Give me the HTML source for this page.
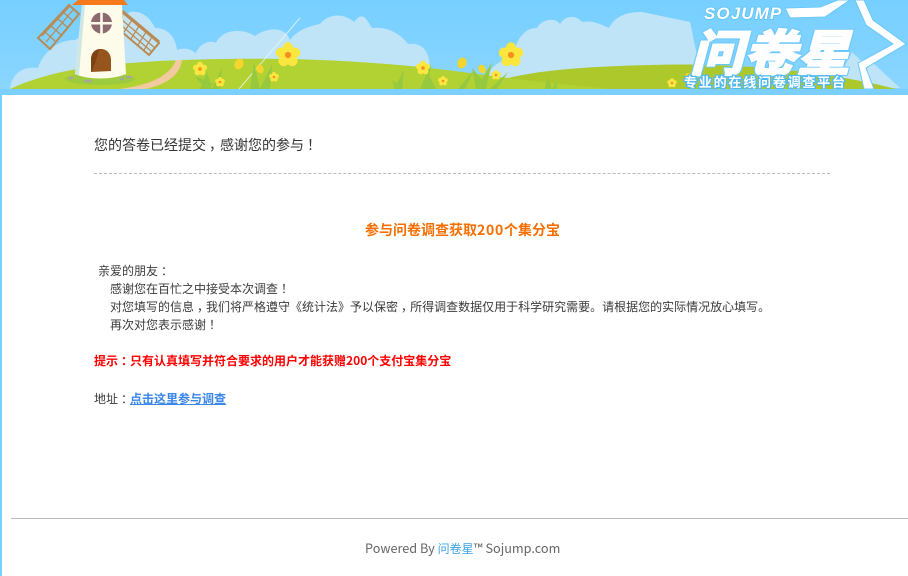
<!DOCTYPE html>
<html lang="zh">
<head>
<meta charset="utf-8">
<title>问卷星</title>
<style>
html,body{margin:0;padding:0;width:908px;height:576px;overflow:hidden;background:#fff;}
body{position:relative;font-family:"Liberation Sans","Noto Sans CJK SC",sans-serif;color:#333;}
.t{position:absolute;white-space:nowrap;font-family:"Noto Sans CJK SC","Liberation Sans",sans-serif;font-size:12px;line-height:18px;color:#3a3a3a;}
.d{letter-spacing:.75px;}
.p{position:relative;left:3px;}
#bar{position:absolute;left:0;top:89px;width:908px;height:6px;background:#7bd0ff;}
#lb{position:absolute;left:0;top:95px;width:2px;height:481px;background:#7bd0ff;}
#dash{position:absolute;left:94px;top:173px;width:736px;border-top:1px dashed #bbb;}
#fl{position:absolute;left:11px;top:518px;width:897px;height:1px;background:#bbb;}
svg{position:absolute;left:0;top:0;display:block;}
a{text-decoration:none;}
</style>
</head>
<body>
<svg width="908" height="89" viewBox="0 0 908 89" xmlns="http://www.w3.org/2000/svg">
  <defs>
    <linearGradient id="sky" x1="0" y1="0" x2="0" y2="1"><stop offset="0" stop-color="#76cfff"/><stop offset="1" stop-color="#8ad6ff"/></linearGradient>
    <g id="fl1"><g fill="#f9e63f"><circle cx="0" cy="-7" r="5"/><circle cx="6.700" cy="-2.200" r="5"/><circle cx="4.100" cy="5.700" r="5"/><circle cx="-4.100" cy="5.700" r="5"/><circle cx="-6.700" cy="-2.200" r="5"/><circle r="5"/></g><circle r="3" fill="#f68f1e"/></g>
  </defs>
  <rect width="908" height="89" fill="url(#sky)"/>
  <!-- clouds -->
  <g fill="#c0e4f7">
    <path d="M10 89C12 72 25 66 38 68C42 55 55 40 75 40L130 12C145 10 152 22 155 28C170 28 176 40 177 50C188 46 193 52 196 53C200 42 212 40 216 43C222 30 240 27 255 36C265 28 285 25 290 40C297 30 310 26 320 24C330 12 345 14 354 22C362 12 365 16 372 28C390 26 402 36 408 44C425 42 430 55 430 70L440 89Z"/>
    <path d="M488 89C486 72 492 62 513 58C516 38 525 28 537 28C542 19 555 17 560 24C565 16 575 14 582 22C592 20 600 24 609 28C616 14 630 12 642 12L690 22L700 70L600 89Z"/>
    <path d="M845 66L852 52L860 60L872 62L900 88H840Z"/>
  </g>
  <!-- hills -->
  <path d="M492 89L508 78C550 68 610 66 650 65C740 62 830 72 896 89Z" fill="#adc82b"/>
  <path d="M10 89C40 75 80 66 130 63C190 58 280 58 320 60C370 62 420 66 470 73C520 80 560 84 610 89Z" fill="#b2d233"/>
  <path d="M120 89C150 85 170 76 176 60L182 60C180 76 165 85 145 89Z" fill="#f3c9a0"/>
  <!-- thin white line -->
  <path d="M239 89L300 18" stroke="#e8f6ff" stroke-width="1" opacity=".8" fill="none"/>
  <!-- blades -->
  <g fill="none" stroke="#b98a52" stroke-width="1.200">
    <path d="M38 38L69 5L79 14L50 49Z" stroke-width="2"/>
    <path d="M44 31L55 41M50 25L61 35M57 18L67 27M62 11L73 21M46 42L73 10M42 36L70 6"/>
    <path d="M122 12L159 43L149 55L122 32Z" stroke-width="2"/>
    <path d="M122 20L155 48M122 26L152 52M132 20L124 32M139 26L131 39M146 32L138 45M152 37L144 50"/>
  </g>
  <path d="M122 11L159 42" stroke="#b98a52" stroke-width="3"/>
  <!-- windmill -->
  <ellipse cx="100" cy="79" rx="35" ry="6" fill="#9ccb3f"/>
  <path d="M82 5L122 5L126 74C112 80 88 80 75 74Z" fill="#fdfbe9"/>
  <path d="M82 5L75 74L79 75L85 5Z" fill="#cfe7e4"/>
  <path d="M78 0H124L128 5H72Z" fill="#f6791c"/>
  <circle cx="101.500" cy="23" r="10.500" fill="#8c6a70"/>
  <path d="M90 22H113V24.500H90ZM100.200 12H102.800V34H100.200Z" fill="#fdfbe9"/>
  <path d="M91 72V60C91 52 96 49 101 49C107 49 111 54 111 60V71Z" fill="#96551c"/>
  <path d="M91 72V60C91 52 96 49 100 49C97 53 96 65 91 72Z" fill="#7e4312"/>
  <g fill="#a9a3a0"><ellipse cx="71" cy="78" rx="2.500" ry="1.400"/><ellipse cx="88" cy="81" rx="4" ry="1.400"/><ellipse cx="122" cy="79" rx="2.500" ry="1.400"/><ellipse cx="129" cy="77" rx="3" ry="1.400"/></g>
  <!-- grass -->
  <g fill="#97c93f">
    <path d="M200 89L207 72L212 89ZM212 89L222 68L220 89ZM250 89L254 62L260 89ZM260 89L272 64L270 89ZM205 89L195 76L214 84Z"/>
    <path d="M394 89L404 70L402 89ZM420 89L431 64L428 89ZM428 89L424 66L436 89ZM458 89L474 70L465 89ZM476 89L492 62L486 89ZM490 89L508 72L497 89ZM476 89L472 68L482 80ZM395 89L392 80L400 86Z"/>
    <path d="M545 89L547 76L552 89ZM552 89L558 80L556 89Z"/>
  </g>
  <!-- flowers -->
  <use href="#fl1" transform="translate(288,55) scale(1.050)"/>
  <use href="#fl1" transform="translate(200,69) scale(.6)"/>
  <use href="#fl1" transform="translate(220,82) scale(.42)"/>
  <use href="#fl1" transform="translate(274,77) scale(.42)"/>
  <use href="#fl1" transform="translate(423,68) scale(.6)"/>
  <use href="#fl1" transform="translate(443,81) scale(.42)"/>
  <use href="#fl1" transform="translate(496,75) scale(.42)"/>
  <use href="#fl1" transform="translate(511,55) scale(1.050)"/>
  <use href="#fl1" transform="translate(672,83) scale(.4)"/>
  <g fill="#f3d52e">
    <ellipse cx="239" cy="64" rx="4.500" ry="5.500" transform="rotate(25 239 64)"/>
    <ellipse cx="260" cy="69" rx="3.500" ry="4.500" transform="rotate(-30 260 69)"/>
    <ellipse cx="462" cy="63" rx="4.500" ry="5.500" transform="rotate(25 462 63)"/>
    <ellipse cx="482" cy="69" rx="3.500" ry="4.500" transform="rotate(-30 482 69)"/>
    <circle cx="688" cy="76" r="3"/>
  </g>
  <!-- star outline -->
  <g fill="#fff" stroke="#6cc8fb" stroke-width="1">
    <path d="M785 8L820 7L838 0H850L825 17L790 18Z"/>
    <path d="M855 0H864L873 20L906 44L866 68L874 89H864L858 63L893 44L866 25Z"/>
  </g>
  <!-- logo -->
  <g font-family="'Noto Sans CJK SC','WenQuanYi Zen Hei',sans-serif" font-weight="900" fill="#fff">
    <text transform="translate(690,71) skewX(-15) scale(1,.88)" font-size="56" textLength="160" lengthAdjust="spacingAndGlyphs" stroke="#6cc8fb" stroke-width="4" stroke-linejoin="round">问卷星</text>
    <text transform="translate(690,71) skewX(-15) scale(1,.88)" font-size="56" textLength="160" lengthAdjust="spacingAndGlyphs" stroke="#fff" stroke-width="1.500">问卷星</text>
    <text x="684" y="87" font-size="13" font-weight="700" letter-spacing="1.800" stroke="#4fb8f5" stroke-width="2.500" paint-order="stroke">专业的在线问卷调查平台</text>
  </g>
  <text x="704" y="19" font-family="'Liberation Sans',sans-serif" font-size="17" font-style="italic" font-weight="700" letter-spacing=".8" fill="#fff" stroke="#5cc0f7" stroke-width="1.500" paint-order="stroke" textLength="78">SOJUMP</text>
</svg>
<div id="bar"></div>
<div id="lb"></div>

<div class="t" style="left:94px;top:135px;font-size:14px;line-height:20px;color:#333;">您的答卷已经提交<span class="p">&#xFF0C;</span>感谢您的参与<span class="p">&#xFF01;</span></div>
<div id="dash"></div>

<div class="t" style="left:365px;top:220px;font-size:14px;line-height:20px;font-weight:700;color:#f56f00;">参与问卷调查获取<span class="d">200</span>个集分宝</div>

<div class="t" style="left:98px;top:262px;">亲爱的朋友<span class="p">&#xFF1A;</span></div>
<div class="t" style="left:110px;top:280px;">感谢您在百忙之中接受本次调查<span class="p">&#xFF01;</span></div>
<div class="t" style="left:110px;top:298px;">对您填写的信息<span class="p">&#xFF0C;</span>我们将严格遵守《统计法》予以保密<span class="p">&#xFF0C;</span>所得调查数据仅用于科学研究需要。请根据您的实际情况放心填写。</div>
<div class="t" style="left:110px;top:316px;">再次对您表示感谢<span class="p">&#xFF01;</span></div>

<div class="t" style="left:94px;top:352px;font-weight:700;color:#f00;">提示<span class="p">&#xFF1A;</span>只有认真填写并符合要求的用户才能获赠200个支付宝集分宝</div>

<div class="t" style="left:94px;top:390px;">地址<span class="p">&#xFF1A;</span><a href="#" style="color:#3a86e8;font-weight:700;text-decoration:underline;">点击这里参与调查</a></div>

<div id="fl"></div>
<div class="t" style="left:365px;top:539px;font-size:12.700px;color:#666;">Powered By <a href="#" style="color:#3aa3e3;font-size:12px;">问卷星</a>™ Sojump.com</div>
</body>
</html>
